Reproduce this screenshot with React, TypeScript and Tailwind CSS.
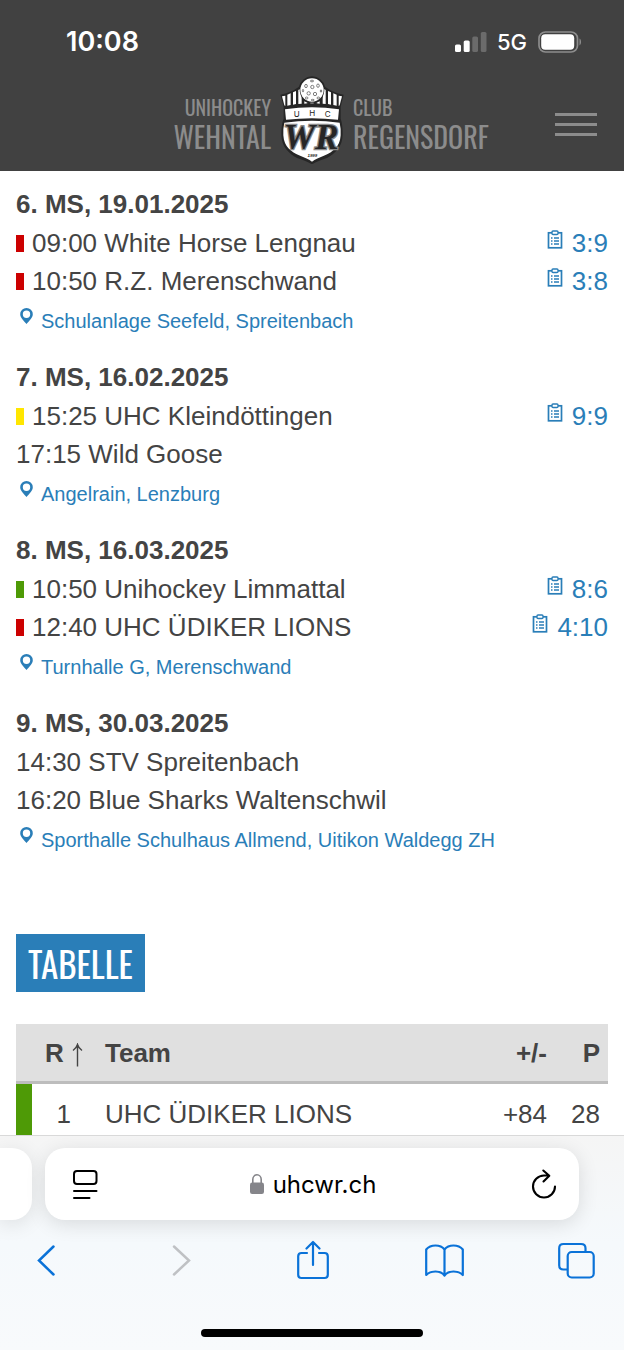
import React from "react";

const condensed =
  "font-['Oswald','Roboto_Condensed','Open_Sans_Condensed','Liberation_Sans_Narrow','DejaVu_Sans_Condensed',sans-serif]";

type Flag = "red" | "yellow" | "green";
type Game = { time: string; team: string; flag?: Flag; score?: string };
type Round = { title: string; games: Game[]; place: string };

const flagColor: Record<Flag, string> = {
  red: "bg-[#cc0000]",
  yellow: "bg-[#ffe600]",
  green: "bg-[#4e9a06]",
};

const rounds: Round[] = [
  {
    title: "6. MS, 19.01.2025",
    games: [
      { time: "09:00", team: "White Horse Lengnau", flag: "red", score: "3:9" },
      { time: "10:50", team: "R.Z. Merenschwand", flag: "red", score: "3:8" },
    ],
    place: "Schulanlage Seefeld, Spreitenbach",
  },
  {
    title: "7. MS, 16.02.2025",
    games: [
      { time: "15:25", team: "UHC Kleindöttingen", flag: "yellow", score: "9:9" },
      { time: "17:15", team: "Wild Goose" },
    ],
    place: "Angelrain, Lenzburg",
  },
  {
    title: "8. MS, 16.03.2025",
    games: [
      { time: "10:50", team: "Unihockey Limmattal", flag: "green", score: "8:6" },
      { time: "12:40", team: "UHC ÜDIKER LIONS", flag: "red", score: "4:10" },
    ],
    place: "Turnhalle G, Merenschwand",
  },
  {
    title: "9. MS, 30.03.2025",
    games: [
      { time: "14:30", team: "STV Spreitenbach" },
      { time: "16:20", team: "Blue Sharks Waltenschwil" },
    ],
    place: "Sporthalle Schulhaus Allmend, Uitikon Waldegg ZH",
  },
];

function StatusBar() {
  return (
    <div className="flex h-[76px] items-center justify-between pt-2 pr-[42px] pl-[66px] font-['Inter',sans-serif] text-white">
      <span className="text-[27px] font-semibold">10:08</span>
      <div className="flex items-center">
        <svg className="h-5 w-8" viewBox="0 0 32 20" aria-hidden="true">
          <rect x="0" y="12.5" width="6" height="7.5" rx="1.6" fill="#fff" />
          <rect x="8.7" y="8.5" width="6" height="11.5" rx="1.6" fill="#fff" />
          <rect x="17.3" y="4.5" width="5.7" height="15.5" rx="1.6" fill="#6b6b6b" />
          <rect x="25.8" y="0" width="5.7" height="20" rx="1.6" fill="#6b6b6b" />
        </svg>
        <span className="ml-[10px] text-[22px] font-medium">5G</span>
        <svg className="ml-[11px] h-[22px] w-[44px]" viewBox="0 0 44 22" aria-hidden="true">
          <rect x="1" y="1" width="38.5" height="20" rx="6.5" fill="none" stroke="#8d8d8d" strokeWidth="1.7" />
          <rect x="3.2" y="3.3" width="33" height="15.4" rx="4" fill="#fff" />
          <path d="M41.5 7.6c2 .6 2 6.200 0 6.800z" fill="#8d8d8d" />
        </svg>
      </div>
    </div>
  );
}

function Crest() {
  const holes = [
    [125, 33, 5, 2.5], [107, 48, 4, 5], [126, 51, 5, 5], [143, 47, 4, 5], [98, 62, 2, 4],
    [115, 70, 5, 5], [134, 72, 5, 5], [152, 63, 2, 4], [109, 84, 4, 3], [127, 90, 5, 2], [144, 84, 4, 3],
  ];
  return (
    <svg className="h-[88px] w-[66px] shrink-0" viewBox="26 18 198 264" role="img" aria-label="UHC Wehntal Regensdorf">
      <path
        d="M30 74Q62 68 86 50A40 40 0 0 1 164 50Q188 68 220 74L211 110V146Q217 162 217 192C217 232 194 250 170 264Q140 274 125 283Q110 274 80 264C56 250 33 232 33 192Q33 162 40 146V110Z"
        fill="#262626"
      />
      <g fill="#fff">
        <path d="M35 79L45 77V108L42 106Z" />
        <path d="M51 74L61 70V105L51 107Z" />
        <path d="M68 67L77 63V102L68 104Z" />
        <path d="M84 60L91 56L94 86V101L84 102Z" />
        <path d="M102 94L111 98V100L102 101Z" />
        <path d="M120 98H130V100H120Z" />
        <path d="M139 98L148 94V101L139 100Z" />
        <path d="M157 86L160 56L166 60V102L157 101Z" />
        <path d="M173 63L182 67V104L173 102Z" />
        <path d="M189 70L199 74V107L189 105Z" />
        <path d="M205 77L215 79L208 106L205 108Z" />
        <path d="M44 118Q125 106 206 118L203 149Q125 140 47 149Z" />
        <path d="M42 158Q125 146 208 158Q212 174 211 196C209 232 186 246 164 256Q138 266 125 275Q112 266 86 256C64 246 41 232 39 196Q38 174 42 158Z" />
      </g>
      <circle cx="125" cy="60" r="37" fill="#262626" />
      <circle cx="125" cy="60" r="35" fill="#fff" />
      <g fill="#fff" stroke="#666" strokeWidth="2.500">
        {holes.map(([x, y, a, b]) => (
          <ellipse key={`${x}-${y}`} cx={x} cy={y} rx={a} ry={b} />
        ))}
      </g>
      <g fill="#222" fontFamily="Inter, sans-serif" fontSize="24" textAnchor="middle">
        <text x="79" y="141">U</text>
        <text x="126" y="138">H</text>
        <text x="172" y="141">C</text>
      </g>
      <text
        x="122"
        y="236"
        fill="#262626"
        stroke="#8a8a8a"
        strokeWidth="8"
        paintOrder="stroke"
        fontFamily="'Liberation Serif', serif"
        fontWeight="700"
        fontStyle="italic"
        fontSize="106"
        textAnchor="middle"
      >
        WR
      </text>
      <text x="126" y="262" fill="#222" fontFamily="'Liberation Sans', sans-serif" fontWeight="700" fontStyle="italic" fontSize="13" textAnchor="middle">
        1999
      </text>
    </svg>
  );
}

function SiteHeader() {
  return (
    <div className={`grid h-[95px] grid-cols-[1fr_66px_1fr] items-start gap-2 text-[#8c8c8c] ${condensed}`}>
      <div className="pt-4 text-right">
        <div className="text-[20px] leading-[30px]">UNIHOCKEY</div>
        <div className="text-[28px] leading-[30px]">WEHNTAL</div>
      </div>
      <Crest />
      <div className="flex items-start justify-between pr-[27px]">
        <div className="pt-4">
          <div className="text-[20px] leading-[30px]">CLUB</div>
          <div className="text-[28px] leading-[30px]">REGENSDORF</div>
        </div>
        <button type="button" aria-label="Menü" className="mt-[37px] flex w-[42px] flex-col gap-[7px]">
          <span className="h-[3px] w-full bg-[#8c8c8c]" />
          <span className="h-[3px] w-full bg-[#8c8c8c]" />
          <span className="h-[3px] w-full bg-[#8c8c8c]" />
        </button>
      </div>
    </div>
  );
}

function ReportIcon() {
  return (
    <svg className="h-[19px] w-4" viewBox="0 0 16 19" fill="none" stroke="#2a7eb8" aria-hidden="true">
      <rect x="1.500" y="2.800" width="13" height="15" strokeWidth="1.700" />
      <rect x="5" y="1" width="6" height="3.500" rx="1" fill="#fff" strokeWidth="1.400" />
      <path d="M4 8h1.500M7 8h5M4 11h1.500M7 11h5M4 14h1.500M7 14h5" strokeWidth="1.300" />
    </svg>
  );
}

function PinIcon() {
  return (
    <svg className="h-4 w-[13px]" viewBox="0 0 13 16" aria-hidden="true">
      <path
        d="M6.500 0A6.300 6.300 0 0 1 12.800 6.300C12.800 10 8.500 13.500 6.500 16C4.500 13.500 .2 10 .2 6.300A6.300 6.300 0 0 1 6.500 0ZM6.500 2.600A3.700 3.700 0 1 0 6.500 10A3.700 3.700 0 1 0 6.500 2.600Z"
        fill="#2a7eb8"
        fillRule="evenodd"
      />
    </svg>
  );
}

function RoundBlock({ round }: { round: Round }) {
  return (
    <section className="mb-[18px]">
      <h3 className="leading-[39px] font-bold">{round.title}</h3>
      {round.games.map((g) => (
        <div key={g.time} className="flex h-[38px] items-center leading-[38px]">
          {g.flag && <span className={`mr-2 h-[17px] w-2 ${flagColor[g.flag]}`} />}
          <span>
            {g.time} {g.team}
          </span>
          {g.score && (
            <a href="#bericht" className="ml-auto flex items-start gap-[9px] text-[#2a7eb8]">
              <span className="flex pt-[6px]">
                <ReportIcon />
              </span>
              {g.score}
            </a>
          )}
        </div>
      ))}
      <a href="#halle" className="flex h-10 items-start gap-2 pl-1 text-[20px] leading-[42px] text-[#2a7eb8]">
        <span className="flex pt-2">
          <PinIcon />
        </span>
        {round.place}
      </a>
    </section>
  );
}

function Standings() {
  return (
    <table className="mt-8 w-full border-collapse">
      <thead>
        <tr className="h-[58px] border-b-[3px] border-[#bdbdbd] bg-[#e0e0e0] text-left">
          <th className="w-4 p-0" aria-label="Status" />
          <th className="w-[73px] p-0 pt-[2px] pl-[13px]">
            <span className="flex items-center gap-2">
              R
              <svg className="mt-1 h-6 w-[11px]" viewBox="0 0 11 24" fill="none" stroke="#444" strokeWidth="1.400" role="img" aria-label="aufsteigend">
                <path d="M5.500 23.500V1.500M1 7.500Q4.500 5 5.500 1.500Q6.500 5 10 7.500" />
              </svg>
            </span>
          </th>
          <th className="p-0 pt-[2px]">Team</th>
          <th className="p-0 pt-[2px] text-right">+/-</th>
          <th className="w-[61px] p-0 pt-[2px] pr-2 text-right">P</th>
        </tr>
      </thead>
      <tbody>
        <tr className="h-16">
          <td className="bg-[#4e9a06] p-0" />
          <td className="p-0 pr-[34px] text-right">1</td>
          <td className="p-0">UHC ÜDIKER LIONS</td>
          <td className="p-0 text-right">+84</td>
          <td className="p-0 pr-2 text-right">28</td>
        </tr>
      </tbody>
    </table>
  );
}

function BrowserBar() {
  return (
    <footer className="flex h-[215px] shrink-0 flex-col overflow-hidden border-t border-[#d9d9d9] bg-linear-to-b from-[#f5f5f5] via-[#f5f9fc] to-[#f8fafc]">
      <div className="flex gap-[13px] pt-3">
        <div className="h-[72px] w-8 rounded-r-[20px] bg-white shadow-[0_4px_20px_rgba(0,0,0,0.10)]" />
        <div className="mr-[45px] flex h-[72px] flex-1 items-center justify-between rounded-[20px] bg-white pr-[22px] pl-7 font-['Inter',sans-serif] text-black shadow-[0_4px_20px_rgba(0,0,0,0.12)]">
          <button type="button" aria-label="Seiteneinstellungen">
            <svg className="h-[30px] w-[25px]" viewBox="0 0 25 30" fill="none" stroke="#000" strokeWidth="2" strokeLinecap="round">
              <rect x="1" y="2" width="22.500" height="13" rx="3" />
              <path d="M1 22H23.500M1 29H16.500" />
            </svg>
          </button>
          <div className="flex items-center gap-2 pr-1">
            <svg className="h-5 w-4" viewBox="0 0 16 20" aria-hidden="true">
              <rect x="1" y="8.500" width="14" height="11.500" rx="2.200" fill="#85858a" />
              <path d="M3.800 9V5.500a4.200 4.700 0 0 1 8.400 0V9" fill="none" stroke="#85858a" strokeWidth="1.600" />
            </svg>
            <span className="pt-[2px] text-[24px]">uhcwr.ch</span>
          </div>
          <button type="button" aria-label="Neu laden">
            <svg className="h-[30px] w-[26px]" viewBox="0 0 26 30" fill="none" stroke="#000" strokeWidth="2.100" strokeLinecap="round" strokeLinejoin="round">
              <path d="M24 17.500A11 11 0 1 1 13 6.500H18M12.300 1.500L18.300 6.700L12.500 12.500" />
            </svg>
          </button>
        </div>
      </div>
      <nav className="flex h-[80px] items-center justify-between pr-[29px] pl-[31px] text-[#0a72d8]">
        <button type="button" aria-label="Zurück" className="flex w-[38px] justify-center pr-2">
          <svg className="h-10 w-[19px] shrink-0" viewBox="0 0 19 40" fill="none" stroke="currentColor" strokeWidth="2.500" strokeLinecap="round">
            <path d="M16.500 6.500L2 20.500L16.500 34.500" />
          </svg>
        </button>
        <button type="button" aria-label="Vorwärts" className="flex w-[38px] justify-center text-[#bfc1c4]">
          <svg className="h-10 w-[19px] shrink-0" viewBox="0 0 19 40" fill="none" stroke="currentColor" strokeWidth="2.500" strokeLinecap="round">
            <path d="M2 6.500L17 20.500L2 34.500" />
          </svg>
        </button>
        <button type="button" aria-label="Teilen" className="flex w-[38px] justify-center">
          <svg className="h-10 w-8 shrink-0" viewBox="0 0 32 40" fill="none" stroke="currentColor" strokeWidth="2.200" strokeLinecap="round" strokeLinejoin="round">
            <path d="M10 13H4.500Q1.200 13 1.200 16.300V34.700Q1.200 38 4.500 38H27.500Q30.800 38 30.800 34.700V16.300Q30.800 13 27.500 13H22M16 25V2M9.500 8.500L16 2L22.500 8.500" />
          </svg>
        </button>
        <button type="button" aria-label="Lesezeichen" className="flex w-[38px] justify-center">
          <svg className="h-10 w-[39px] shrink-0" viewBox="0 0 39 40" fill="none" stroke="currentColor" strokeWidth="2.200" strokeLinejoin="round">
            <path d="M19.500 35.500V9.500Q16.500 5.500 10.500 5.500T1.200 9.500V35Q4.500 31.500 10.500 31.500T19.500 35.500Q22.500 31.500 28.500 31.500T37.800 35V9.500Q34.500 5.500 28.500 5.500T19.500 9.500" />
          </svg>
        </button>
        <button type="button" aria-label="Tabs" className="flex w-[38px] justify-center">
          <svg className="h-10 w-[37px] shrink-0" viewBox="0 0 37 40" fill="none" stroke="currentColor" strokeWidth="2.200">
            <path d="M9.500 29.500H5.500Q1.200 29.500 1.200 25.200V8.300Q1.200 4 5.500 4H23Q27.500 4 27.500 8.300V12" />
            <rect x="9.700" y="12" width="26" height="25.500" rx="4" />
          </svg>
        </button>
      </nav>
      <div className="mx-auto mt-[29px] h-2 w-[222px] rounded-full bg-black" />
    </footer>
  );
}

export default function App() {
  return (
    <div className="flex h-screen flex-col overflow-hidden bg-white font-['Liberation_Sans',sans-serif] text-[#444]">
      <header className="shrink-0 bg-[#414141]">
        <StatusBar />
        <SiteHeader />
      </header>
      <main className="min-h-0 flex-1 overflow-hidden px-4 pt-[14px] text-[26px]">
        {rounds.map((r) => (
          <RoundBlock key={r.title} round={r} />
        ))}
        <h2 className={`mt-[75px] flex h-[58px] w-fit items-center bg-[#2a7eb8] px-3 text-[35px] font-normal text-white ${condensed}`}>
          TABELLE
        </h2>
        <Standings />
      </main>
      <BrowserBar />
    </div>
  );
}
